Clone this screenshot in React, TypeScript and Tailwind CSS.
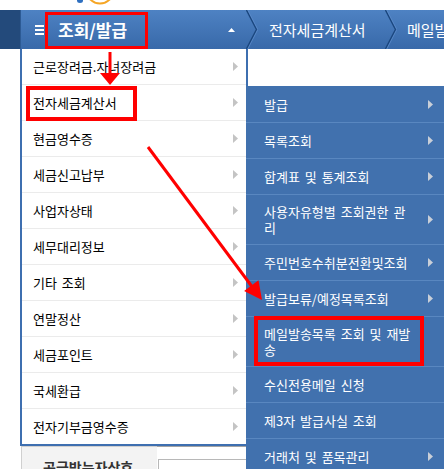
import React from "react";

type Item = { label: React.ReactNode; arrow?: boolean; tall?: boolean };

const mainItems: Item[] = [
  { label: "근로장려금.자녀장려금", arrow: true },
  { label: "전자세금계산서", arrow: true },
  { label: "현금영수증", arrow: true },
  { label: "세금신고납부", arrow: true },
  { label: "사업자상태", arrow: true },
  { label: "세무대리정보", arrow: true },
  { label: "기타 조회", arrow: true },
  { label: "연말정산", arrow: true },
  { label: "세금포인트", arrow: true },
  { label: "국세환급", arrow: true },
  { label: "전자기부금영수증", arrow: true },
];

const subItems: Item[] = [
  { label: "발급", arrow: true },
  { label: "목록조회", arrow: true },
  { label: "합계표 및 통계조회", arrow: true },
  {
    label: (
      <>
        사용자유형별 조회권한 관<br />리
      </>
    ),
    arrow: true,
    tall: true,
  },
  { label: "주민번호수취분전환및조회", arrow: true },
  { label: "발급보류/예정목록조회", arrow: true },
  {
    label: (
      <>
        메일발송목록 조회 및 재발<br />송
      </>
    ),
    tall: true,
  },
  { label: "수신전용메일 신청" },
  { label: "제3자 발급사실 조회" },
  { label: "거래처 및 품목관리", arrow: true },
];

function Caret({ color }: { color: string }) {
  return (
    <svg width="5" height="9" viewBox="0 0 5 9" className="shrink-0">
      <polygon points="0,0 5,4.5 0,9" fill={color} />
    </svg>
  );
}

function Chevron() {
  return (
    <svg width="12" height="39" viewBox="0 0 12 39" className="shrink-0">
      <polyline points="0.5,0 10.5,19.5 0.5,39" fill="none" stroke="#1b477f" strokeWidth="1.5" />
      <polyline points="1.8,0 11.8,19.5 1.8,39" fill="none" stroke="#5d8dcb" strokeWidth="0.8" />
    </svg>
  );
}

function NavBar() {
  return (
    <div className="flex h-[39px] text-white">
      <div className="w-[20px] shrink-0 bg-[#234a7b]" />
      <div className="w-[1px] shrink-0 bg-[#2c5a94]" />
      <div className="flex w-[225px] shrink-0 items-center bg-gradient-to-b from-[#4e82c3] to-[#3869a9]">
        <div className="ml-[14px] flex shrink-0 flex-col gap-[2px]">
          <div className="h-[2px] w-[9px] bg-white" />
          <div className="h-[2px] w-[9px] bg-white" />
          <div className="h-[2px] w-[9px] bg-white" />
        </div>
        <span className="ml-[14px] shrink-0 whitespace-nowrap text-[17px] leading-none font-bold">
          조회/발급
        </span>
        <svg width="7" height="4" viewBox="0 0 7 4" className="ml-auto mr-[11px] shrink-0">
          <polygon points="0,4 3.5,0 7,4" fill="#ffffff" />
        </svg>
      </div>
      <div className="flex min-w-0 flex-1 bg-gradient-to-b from-[#4e82c3] to-[#3869a9]">
        <Chevron />
        <div className="flex w-[127px] shrink-0 items-center whitespace-nowrap pl-[11px] text-[15px] leading-none">
          전자세금계산서
        </div>
        <Chevron />
        <div className="flex min-w-0 items-center overflow-hidden whitespace-nowrap pl-[10px] text-[15px] leading-none">
          메일발송목록 조회 및 재발송
        </div>
      </div>
    </div>
  );
}

function MainMenu() {
  return (
    <div className="ml-[20px] w-[228px] border-2 border-t-0 border-[#3e6fb0] bg-white">
      {mainItems.map((item, i) => (
        <div
          key={i}
          className={`flex items-center pl-[11px] pr-[8px] text-[13px] leading-none text-black ${
            i === 0 ? "h-[35px]" : "h-[36px] border-t border-[#ebebeb]"
          }`}
        >
          <span className="flex-1 whitespace-nowrap [word-spacing:2px]">{item.label}</span>
          {item.arrow && <Caret color="#c4c4c4" />}
        </div>
      ))}
    </div>
  );
}

function SubMenu() {
  return (
    <div className="-ml-[2px] mt-[37px] w-[198px] bg-[#4171ae] text-white">
      {subItems.map((item, i) => (
        <div
          key={i}
          className={`flex items-center pl-[18px] pr-[11px] text-[13px] ${
            item.tall ? "h-[50px] leading-[16px]" : "h-[36px] leading-none"
          } ${i === 0 ? "" : "border-t border-[#5987c0]"}`}
        >
          <span className="flex-1 whitespace-nowrap [word-spacing:2px]">{item.label}</span>
          {item.arrow && <Caret color="#c9cfd8" />}
        </div>
      ))}
    </div>
  );
}

function Annotations() {
  return (
    <svg
      width="444"
      height="469"
      viewBox="0 0 444 469"
      className="pointer-events-none absolute left-0 top-0"
    >
      <rect x="46.5" y="13.5" width="100" height="34" fill="none" stroke="#ff0000" strokeWidth="3" />
      <rect x="28" y="88" width="107" height="31" fill="none" stroke="#ff0000" strokeWidth="4" />
      <rect x="256" y="318" width="166" height="46" fill="none" stroke="#ff0000" strokeWidth="4" />
      <line x1="110" y1="52" x2="110" y2="75" stroke="#ff0000" strokeWidth="3" />
      <polygon points="100,73 120,73 110,85" fill="#ff0000" />
      <line x1="148" y1="147" x2="253" y2="288" stroke="#ff0000" strokeWidth="3" />
      <polygon points="262,300 258.5,280.2 244.1,291" fill="#ff0000" />
    </svg>
  );
}

export default function App() {
  return (
    <div className="relative h-[469px] w-[444px] overflow-hidden bg-white font-['Noto_Sans_CJK_KR',sans-serif]">
      {/* site logo peeking above the bar */}
      <div className="h-[10px] overflow-hidden">
        <svg width="130" height="10" viewBox="0 0 130 10">
          <ellipse cx="80" cy="0.5" rx="3" ry="2.5" fill="#2e6fc0" />
          <circle cx="100" cy="-10" r="13.5" fill="none" stroke="#f5a524" strokeWidth="2" />
        </svg>
      </div>
      <NavBar />
      <div className="flex items-start">
        <div className="flex w-[248px] shrink-0 flex-col">
          <MainMenu />
          {/* form row under the dropdown */}
          <div className="ml-[21px] flex h-[23px]">
            <div className="w-[136px] overflow-hidden whitespace-nowrap border-l border-t border-[#d0d0d0] bg-[#f3f3f3] pl-[21px] pt-[13px] text-[14px] leading-none font-bold text-[#333]">
              공급받는자상호
            </div>
            <div className="flex-1 border-t border-[#a3a3a3] pt-[12px]">
              <div className="ml-[1px] h-[20px] border border-[#b8b8b8] bg-white" />
            </div>
          </div>
        </div>
        <SubMenu />
      </div>
      <Annotations />
    </div>
  );
}
